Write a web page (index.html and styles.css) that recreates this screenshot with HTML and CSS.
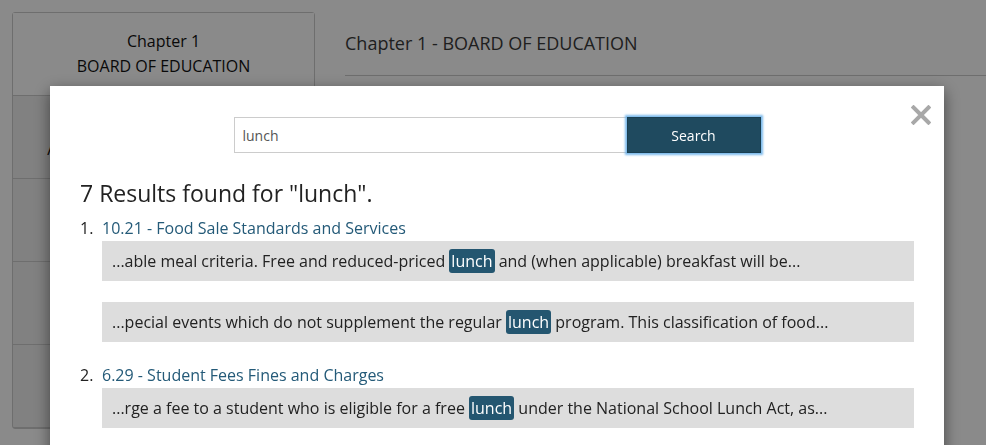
FILE: index.html
```html
<!DOCTYPE html>
<html>
<head>
<meta charset="utf-8">
<link rel="stylesheet" href="styles.css">
</head>
<body>
<div class="page">
  <aside class="sidebar">
    <div class="side-row side-head">Chapter 1<br>BOARD OF EDUCATION</div>
    <div class="side-row">Article 1<br>ADMINISTRATIVE PROCEDURES</div>
    <div class="side-row"></div>
    <div class="side-row"></div>
    <div class="side-row"></div>
  </aside>
  <main class="main">
    <h2 class="main-title">Chapter 1 - BOARD OF EDUCATION</h2>
  </main>
</div>
<div class="overlay">
  <div class="modal">
    <button class="close" aria-label="Close"><svg width="20" height="20" viewBox="0 0 20 20"><path d="M2.5 2.5 L17.5 17.5 M17.5 2.5 L2.5 17.5" stroke="#a8a8a8" stroke-width="4" stroke-linecap="square" fill="none"/></svg></button>
    <form class="search">
      <input class="search-input" type="text" value="lunch">
      <button class="search-btn" type="button">Search</button>
    </form>
    <h3 class="results-title">7 Results found for "lunch".</h3>
    <ol class="results">
      <li class="result">
        <a class="result-link" href="#">10.21 - Food Sale Standards and Services</a>
        <div class="snippet">...able meal criteria. Free and reduced-priced <span class="hl">lunch</span> and (when applicable) breakfast will be...</div>
        <div class="snippet">...pecial events which do not supplement the regular <span class="hl">lunch</span> program. This classification of food...</div>
      </li>
      <li class="result">
        <a class="result-link" href="#">6.29 - Student Fees Fines and Charges</a>
        <div class="snippet">...rge a fee to a student who is eligible for a free <span class="hl">lunch</span> under the National School Lunch Act, as...</div>
      </li>
    </ol>
  </div>
</div>
</body>
</html>
```
FILE: styles.css
```css
* { box-sizing: border-box; }
html, body { margin: 0; padding: 0; height: 100%; overflow: hidden; }
body {
  font-family: "Open Sans", "Liberation Sans", sans-serif;
  color: #333;
  background: #fff;
}
.page {
  display: flex;
  padding: 12px 0 0 12px;
}
.sidebar {
  width: 303px;
  flex: none;
  border: 1px solid #ccc;
  border-radius: 3px;
  background: #eee;
}
.side-row {
  height: 83px;
  border-bottom: 1px solid #ccc;
  display: flex;
  align-items: center;
  justify-content: center;
  text-align: center;
  font-size: 16px;
  line-height: 25px;
  color: #111;
}
.side-head { background: #fff; }
.main {
  flex: 1;
  margin-left: 30px;
}
.main-title {
  margin: 0;
  padding: 19px 0 20px;
  font-size: 18px;
  line-height: 24px;
  font-weight: 400;
  color: #3a3a3a;
  border-bottom: 1px solid #ccc;
}
.overlay {
  position: fixed;
  inset: 0;
  background: rgba(0, 0, 0, 0.46);
  padding: 86px 42px 0 50px;
}
.modal {
  position: relative;
  background: #fff;
  height: 420px;
  padding: 31px 30px 0;
  box-shadow: 0 5px 15px rgba(0, 0, 0, 0.5);
}
.close {
  position: absolute;
  top: 19px;
  right: 13px;
  padding: 0;
  border: 0;
  background: none;
  width: 20px;
  height: 20px;
  display: block;
}
.close svg { display: block; }
.search {
  display: flex;
  justify-content: center;
  margin: 0;
}
.search-input {
  width: 394px;
  height: 36px;
  border: 1px solid #ccc;
  padding: 0 8px;
  font-family: inherit;
  font-size: 14px;
  color: #555;
  outline: none;
}
.search-btn {
  width: 134px;
  height: 36px;
  margin-left: -1px;
  border: 1px solid #1a3f52;
  background: #1f4a5f;
  color: #fff;
  font-family: inherit;
  font-size: 14px;
  box-shadow: 0 0 2px 2px rgba(102, 175, 233, 0.85);
}
.results-title {
  margin: 28px 0 12px;
  font-size: 23px;
  line-height: 24px;
  font-weight: 400;
  color: #222;
}
.results {
  list-style: none;
  margin: 0;
  padding: 0;
  counter-reset: item;
}
.result {
  counter-increment: item;
  display: grid;
  grid-template-columns: 22px 1fr;
  font-size: 16px;
  margin-bottom: 1px;
}
.result::before {
  content: counter(item) ".";
  grid-column: 1;
  grid-row: 1;
  line-height: 22px;
  color: #222;
}
.result-link, .snippet { grid-column: 2; }
.result-link {
  line-height: 22px;
  color: #245a78;
  text-decoration: none;
  margin-bottom: 2px;
}
.snippet {
  background: #ddd;
  padding: 10px 10px;
  line-height: 20px;
  color: #222;
  margin-bottom: 21px;
  white-space: nowrap;
}
.hl {
  background: #245670;
  color: #fff;
  border-radius: 3px;
  padding: 1px 2px;
}
```
